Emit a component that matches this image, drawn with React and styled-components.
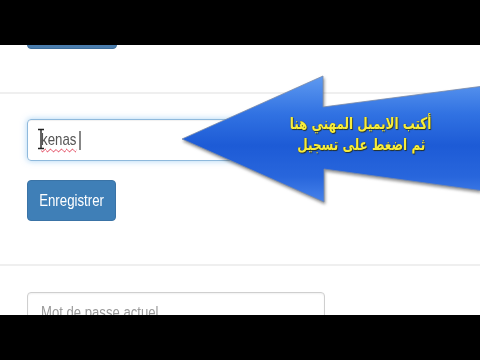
import React from "react";
import styled, { createGlobalStyle } from "styled-components";

const Global = createGlobalStyle`
  html, body { margin: 0; padding: 0; background: #000; }
  * { box-sizing: border-box; }
`;

const Frame = styled.div`
  width: 480px;
  height: 360px;
  display: flex;
  flex-direction: column;
  background: #000;
  overflow: hidden;
  font-family: "Liberation Sans", Arial, sans-serif;
`;

const Letterbox = styled.div`
  height: ${(p) => p.$h}px;
  flex: none;
  background: #000;
`;

const Screen = styled.div`
  position: relative;
  height: 270px;
  flex: none;
  background: #fff;
  overflow: hidden;
`;

const Section = styled.div`
  display: flex;
  flex-direction: column;
  align-items: flex-start;
  gap: 19px;
  padding: ${(p) => p.$pad};
  margin-top: ${(p) => p.$mt || 0}px;
`;

const Divider = styled.div`
  height: 2px;
  background: #efefef;
`;

/* the video frame is squeezed horizontally: text is narrowed to match */
const Narrow = styled.span`
  display: inline-block;
  white-space: nowrap;
  transform: scaleX(${(p) => p.$k || 0.82});
  transform-origin: ${(p) => p.$origin || "left"} center;
`;

const Button = styled.button`
  display: flex;
  align-items: center;
  justify-content: center;
  height: 41px;
  width: ${(p) => p.$w}px;
  padding: 0;
  border: 1px solid ${(p) => p.$border};
  border-radius: 4px;
  background: ${(p) => p.$bg};
  color: #fff;
  font-family: inherit;
  font-size: 17px;
  line-height: 1;
  overflow: visible;
`;

const Field = styled.div`
  position: relative;
  width: 298px;
  height: 42px;
  border: 1px solid ${(p) => (p.$focus ? "#8fb9dc" : "#cfcfcf")};
  border-radius: 4px;
  box-shadow: ${(p) =>
    p.$focus
      ? "0 0 6px rgba(102, 175, 233, 0.55), inset 0 1px 1px rgba(0, 0, 0, 0.06)"
      : "inset 0 1px 2px rgba(0, 0, 0, 0.06)"};
  display: flex;
  align-items: center;
  padding-left: 13px;
  font-size: ${(p) => (p.$focus ? 17 : 16)}px;
  color: ${(p) => (p.$placeholder ? "#9a9a9a" : "#555")};
`;

const Typed = styled.span`
  text-decoration: underline wavy #e0304a;
  text-decoration-thickness: 1px;
  text-underline-offset: 3px;
`;

const Caret = styled.span`
  display: inline-block;
  vertical-align: middle;
  width: 1.3px;
  height: 19px;
  margin-left: 4px;
  background: #666;
`;

const IBeam = styled.svg`
  position: absolute;
  left: 9px;
  top: 8px;
`;

const Callout = styled.div`
  position: absolute;
  left: 0;
  top: 0;
  width: 480px;
  height: 200px;
  pointer-events: none;
`;

const ArrowSvg = styled.svg`
  position: absolute;
  left: 0;
  top: 0;
  filter: drop-shadow(1px 2px 1.5px rgba(60, 60, 60, 0.55));
`;

const CalloutText = styled.div`
  position: absolute;
  left: 261px;
  top: 68px;
  width: 200px;
  display: flex;
  flex-direction: column;
  align-items: center;
  direction: rtl;
  font-family: "DejaVu Sans", "Noto Sans", sans-serif;
  font-weight: bold;
  font-size: 16px;
  line-height: 21px;
  color: #f6ec3c;
  text-shadow: 0 0 1px #3a3a10, 1px 1px 1px rgba(40, 40, 0, 0.8);
`;

const ArabicLine = styled.span`
  display: inline-block;
  white-space: nowrap;
  transform: scaleX(0.75);
  transform-origin: center;
`;

export default function App() {
  return (
    <>
      <Global />
      <Frame>
        <Letterbox $h={45} />
        <Screen>
          <Section $pad="0 27px 43px" $mt={-37}>
            <Button $w={90} $bg="#4a7dad" $border="#3f6f9c">
              <Narrow $origin="center" $k={0.78}>Enregistrer</Narrow>
            </Button>
          </Section>
          <Divider />
          <Section $pad="25px 27px 43px">
            <Field $focus>
              <IBeam width="8" height="22" viewBox="0 0 8 22">
                <path d="M1 1.5h6M4 1.5v19M1 20.5h6" stroke="#222" strokeWidth="1.4" fill="none" />
              </IBeam>
              <Narrow $k={0.78}>
                <Typed>kenas</Typed>
                <Caret />
              </Narrow>
            </Field>
            <Button $w={89} $bg="#3f7fb7" $border="#3a73a6">
              <Narrow $origin="center" $k={0.78}>Enregistrer</Narrow>
            </Button>
          </Section>
          <Divider />
          <Section $pad="26px 27px 0">
            <Field $placeholder>
              <Narrow>Mot de passe actuel</Narrow>
            </Field>
          </Section>

          <Callout>
            <ArrowSvg width="480" height="200" viewBox="0 0 480 200">
              <defs>
                <linearGradient id="arrowFill" x1="0" y1="0" x2="0" y2="1">
                  <stop offset="0" stopColor="#5f9af0" />
                  <stop offset="0.3" stopColor="#3172e2" />
                  <stop offset="0.55" stopColor="#1d5bd6" />
                  <stop offset="0.8" stopColor="#2866dc" />
                  <stop offset="1" stopColor="#4682ea" />
                </linearGradient>
              </defs>
              <polygon
                points="182,94 323,31 323,62 484,41 484,146 324,124 324,157"
                fill="url(#arrowFill)"
                stroke="#7a8aa8"
                strokeWidth="0.8"
              />
            </ArrowSvg>
            <CalloutText>
              <ArabicLine>أكتب الايميل المهني هنا</ArabicLine>
              <ArabicLine>ثم اضغط على تسجيل</ArabicLine>
            </CalloutText>
          </Callout>
        </Screen>
        <Letterbox $h={45} />
      </Frame>
    </>
  );
}
